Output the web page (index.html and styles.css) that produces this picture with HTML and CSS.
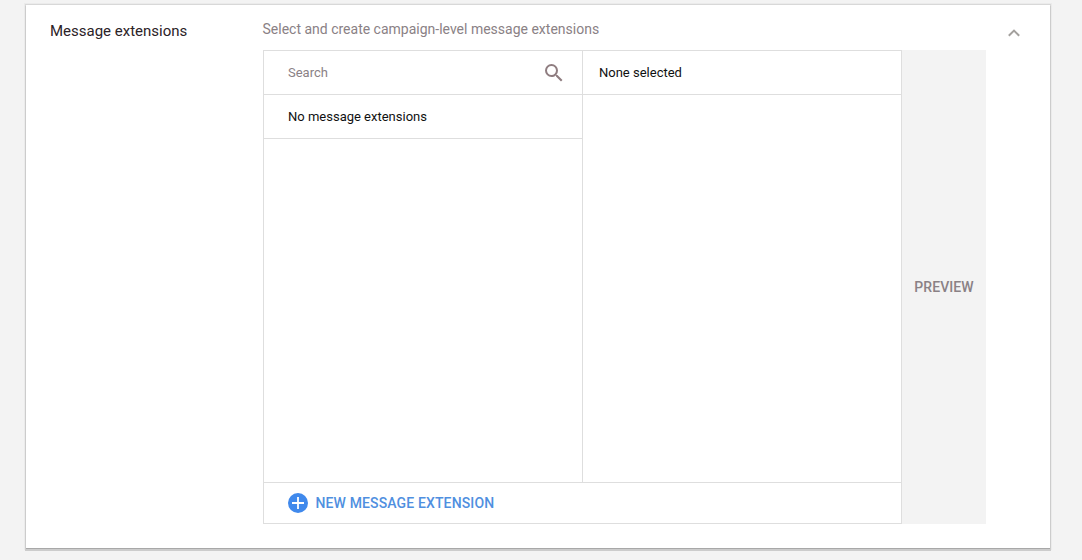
FILE: index.html
```html
<!DOCTYPE html>
<html lang="en">
<head>
    <meta charset="UTF-8">
    <meta name="viewport" content="width=device-width, initial-scale=1.0">
    <title>Message extensions</title>
    <link rel="stylesheet" href="styles.css">
</head>
<body>
    <section class="card">
        <h2 class="title">Message extensions</h2>
        <div class="content">
            <p class="hint">Select and create campaign-level message extensions</p>
            <div class="editor">
                <div class="picker">
                    <div class="lists">
                        <div class="available">
                            <div class="row search">
                                <span>Search</span>
                                <svg width="24" height="24" viewBox="0 0 24 24" fill="#8f7d80">
                                    <path d="M15.5 14h-.79l-.28-.27A6.471 6.471 0 0 0 16 9.5 6.5 6.5 0 1 0 9.5 16c1.61 0 3.09-.59 4.23-1.57l.27.28v.79l5 4.99L20.49 19l-4.99-5zm-6 0C7.01 14 5 11.99 5 9.5S7.01 5 9.5 5 14 7.01 14 9.5 11.99 14 9.5 14z"/>
                                </svg>
                            </div>
                            <div class="row">No message extensions</div>
                        </div>
                        <div class="selected">
                            <div class="row">None selected</div>
                        </div>
                    </div>
                    <div class="new">
                        <svg width="20" height="20" viewBox="0 0 20 20">
                            <circle cx="10" cy="10" r="10" fill="#4089ec"/>
                            <path d="M10 4v12M4 10h12" stroke="#fff" stroke-width="1.8"/>
                        </svg>
                        <span>NEW MESSAGE EXTENSION</span>
                    </div>
                </div>
                <div class="preview">PREVIEW</div>
            </div>
        </div>
        <svg class="collapse" width="12" height="8" viewBox="0 0 12 8">
            <path d="M.8 6.8L6 1.6l5.2 5.2" fill="none" stroke="#a3a09d" stroke-width="2"/>
        </svg>
    </section>
</body>
</html>
```

FILE: styles.css
```css
* {
    box-sizing: border-box;
}
body {
    font-family: Roboto, Arial, sans-serif;
    margin: 0;
    padding: 5px 32px 0 26px;
    height: 560px;
    overflow: hidden;
    background-color: #f3f3f3;
}
.card {
    display: flex;
    width: 1024px;
    height: 543px;
    padding-left: 24px;
    background-color: #fff;
    box-shadow: 0 1px 0 #a8a8a8, 0 2px 0 1px #ccc, 0 0 0 1px #d8d8d8, 0 0 0 2px #ebebeb;
}
.title {
    width: 213px;
    margin: 16px 0 0;
    font-size: 15px;
    font-weight: 400;
    line-height: 20px;
    color: #2b2227;
}
.content {
    width: 723px;
}
.hint {
    margin: 14px 0 11px -0.5px;
    font-size: 14px;
    line-height: 20px;
    color: #8a8185;
}
.editor {
    display: flex;
    height: 474px;
}
.picker {
    display: flex;
    flex-direction: column;
    width: 639px;
    border: 1px solid #dedede;
    font-size: 13px;
    color: #111;
}
.lists {
    display: flex;
    flex: 1;
}
.available {
    width: 319px;
    border-right: 1px solid #dedede;
}
.selected {
    flex: 1;
}
.row {
    display: flex;
    align-items: center;
    height: 44px;
    padding: 0 16px 0 24px;
    border-bottom: 1px solid #dedede;
}
.selected .row {
    padding-left: 16px;
}
.search {
    justify-content: space-between;
    color: #8a8185;
}
.new {
    display: flex;
    align-items: center;
    height: 41px;
    padding-left: 24px;
    border-top: 1px solid #dedede;
    font-size: 14px;
    font-weight: 500;
    letter-spacing: 0.13px;
    color: #4f8fe0;
}
.new span {
    margin-left: 7.5px;
}
.preview {
    display: flex;
    flex: 1;
    align-items: center;
    justify-content: center;
    background-color: #f3f3f3;
    font-size: 14px;
    font-weight: 500;
    letter-spacing: 0.1px;
    color: #8a8185;
}
.collapse {
    margin: 24px 0 0 22px;
}
```
